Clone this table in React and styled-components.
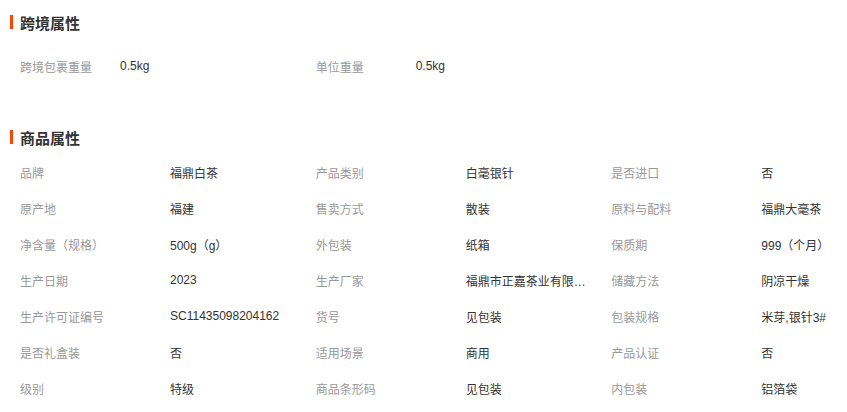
import React from "react";
import styled, { createGlobalStyle } from "styled-components";

const Global = createGlobalStyle`
  html, body { margin: 0; padding: 0; background: #fff; overflow: hidden; }
  body { font-family: "Liberation Sans", "Noto Sans CJK SC", sans-serif; }
`;

const Page = styled.div`
  padding-top: 10px;
`;

const Section = styled.section`
  margin-bottom: ${(p) => p.$gap || 0}px;
`;

const Title = styled.h3`
  margin: 0 0 ${(p) => p.$after || 0}px 0;
  padding-left: 10px;
  display: flex;
  align-items: center;
  gap: 7px;
  height: 24px;
  font-size: 15px;
  font-weight: bold;
  color: #333;
  &::before {
    content: "";
    width: 3px;
    height: 14px;
    background: #ff4400;
  }
`;

const Grid = styled.div`
  display: grid;
  grid-template-columns: 295.67px 295.67px 1fr;
  padding-left: 20px;
`;

const Item = styled.div`
  display: flex;
  height: 36px;
  align-items: center;
  font-size: 12px;
  min-width: 0;
`;

const Label = styled.span`
  flex: 0 0 ${(p) => p.$w}px;
  color: #999;
  white-space: nowrap;
`;

const Value = styled.span`
  min-width: 0;
  max-width: 125px;
  color: #333;
  white-space: nowrap;
  overflow: hidden;
  text-overflow: ellipsis;
`;

const cross = [
  ["跨境包裹重量", "0.5kg"],
  ["单位重量", "0.5kg"],
];

const attrs = [
  ["品牌", "福鼎白茶"],
  ["产品类别", "白毫银针"],
  ["是否进口", "否"],
  ["原产地", "福建"],
  ["售卖方式", "散装"],
  ["原料与配料", "福鼎大毫茶"],
  ["净含量（规格）", "500g（g）"],
  ["外包装", "纸箱"],
  ["保质期", "999（个月）"],
  ["生产日期", "2023"],
  ["生产厂家", "福鼎市正嘉茶业有限公司"],
  ["储藏方法", "阴凉干燥"],
  ["生产许可证编号", "SC11435098204162"],
  ["货号", "见包装"],
  ["包装规格", "米芽,银针3#"],
  ["是否礼盒装", "否"],
  ["适用场景", "商用"],
  ["产品认证", "否"],
  ["级别", "特级"],
  ["商品条形码", "见包装"],
  ["内包装", "铝箔袋"],
];

export default function App() {
  return (
    <Page>
      <Global />
      <Section $gap={41}>
        <Title $after={14}>跨境属性</Title>
        <Grid>
          {cross.map(([l, v]) => (
            <Item key={l}>
              <Label $w={100}>{l}</Label>
              <Value>{v}</Value>
            </Item>
          ))}
        </Grid>
      </Section>
      <Section>
        <Title $after={5}>商品属性</Title>
        <Grid>
          {attrs.map(([l, v]) => (
            <Item key={l}>
              <Label $w={150}>{l}</Label>
              <Value>{v}</Value>
            </Item>
          ))}
        </Grid>
      </Section>
    </Page>
  );
}
